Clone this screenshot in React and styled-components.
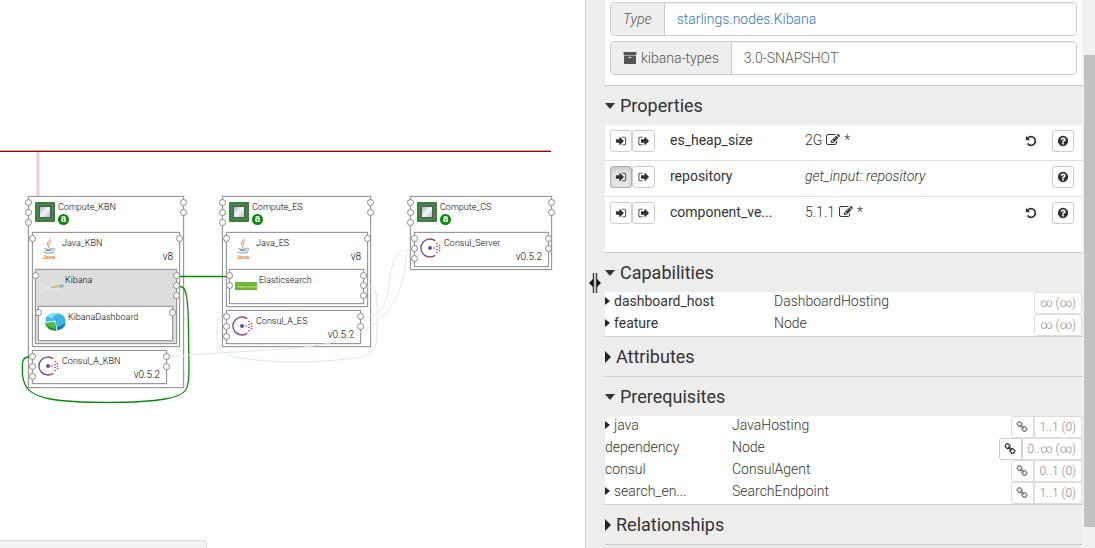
import React from "react";
import styled, { createGlobalStyle, css } from "styled-components";

const GlobalStyle = createGlobalStyle`
  * { box-sizing: border-box; }
  body {
    margin: 0;
    background: #fff;
    color: #333;
    font: 300 14px/20px Roboto, "Liberation Sans", sans-serif;
  }
  button, input { font: inherit; color: inherit; }
`;

/* ---------- icons ---------- */

const PATHS = {
  signIn:
    "M1312 896q0 26-19 45l-544 544q-19 19-45 19t-45-19-19-45v-288h-448q-26 0-45-19t-19-45v-384q0-26 19-45t45-19h448v-288q0-26 19-45t45-19 45 19l544 544q19 19 19 45zm352-352v704q0 119-84.500 203.500t-203.500 84.500h-320q-13 0-22.500-9.500t-9.500-22.500q0-4-1-20t-.5-26.500 3-23.500 10-19.500 20.500-6.500h320q66 0 113-47t47-113v-704q0-66-47-113t-113-47h-312l-11.500-1-11.500-3-8-5.500-7-9-2-13.500q0-4-1-20t-.5-26.500 3-23.500 10-19.500 20.500-6.500h320q119 0 203.500 84.500t84.500 203.500z",
  signOut:
    "M704 1440q0 4 1 20t.5 26.500-3 23.500-10 19.500-20.500 6.500h-320q-119 0-203.500-84.500t-84.500-203.500v-704q0-119 84.500-203.500t203.500-84.500h320q13 0 22.500 9.500t9.500 22.500q0 4 1 20t.5 26.500-3 23.500-10 19.500-20.500 6.500h-320q-66 0-113 47t-47 113v704q0 66 47 113t113 47h312l11.500 1 11.500 3 8 5.500 7 9 2 13.500zm928-544q0 26-19 45l-544 544q-19 19-45 19t-45-19-19-45v-288h-448q-26 0-45-19t-19-45v-384q0-26 19-45t45-19h448v-288q0-26 19-45t45-19 45 19l544 544q19 19 19 45z",
  undo:
    "M1664 896q0 156-61 298t-164 245-245 164-298 61q-172 0-327-72.500t-264-204.500q-7-10-6.500-22.500t8.500-20.500l137-138q10-9 25-9 16 2 23 12 73 95 179 147t225 52q104 0 198.500-40.500t163.500-109.500 109.500-163.500 40.500-198.500-40.500-198.500-109.500-163.500-163.500-109.500-198.500-40.500q-98 0-188 35.500t-160 101.500l137 138q31 30 14 69-17 40-59 40h-448q-26 0-45-19t-19-45v-448q0-42 40-59 39-17 69 14l130 129q107-101 244.500-156.500t284.500-55.500q156 0 298 61t245 164 164 245 61 298z",
  link:
    "M1520 1216q0-40-28-68l-208-208q-28-28-68-28-42 0-72 32 3 3 19 18.500t21.500 21.500 15 19 13 25.500 3.500 27.500q0 40-28 68t-68 28q-15 0-27.500-3.500t-25.500-13-19-15-21.500-21.500-18.500-19q-33 31-33 73 0 40 28 68l206 207q27 27 68 27 40 0 68-26l147-146q28-28 28-67zm-703-705q0-40-28-68l-206-207q-28-28-68-28-39 0-68 27l-147 146q-28 28-28 67 0 40 28 68l208 208q27 27 68 27 42 0 72-31-3-3-19-18.500t-21.500-21.500-15-19-13-25.500-3.500-27.500q0-40 28-68t68-28q15 0 27.500 3.500t25.500 13 19 15 21.500 21.500 18.500 19q33-31 33-73zm895 705q0 120-85 203l-147 146q-83 83-203 83-121 0-204-85l-206-207q-83-83-83-203 0-123 88-209l-88-88q-86 88-208 88-120 0-204-84l-208-208q-84-84-84-204t85-203l147-146q83-83 203-83 121 0 204 85l206 207q83 83 83 203 0 123-88 209l88 88q86-88 208-88 120 0 204 84l208 208q84 84 84 204z",
  edit:
    "M888 1184l116-116-152-152-116 116v56h96v96h56zm440-720q-16-16-33 1l-350 350q-17 17-1 33t33-1l350-350q17-17 1-33zm80 594v190q0 119-84.500 203.500t-203.500 84.500h-832q-119 0-203.500-84.500t-84.500-203.500v-832q0-119 84.500-203.500t203.500-84.500h832q63 0 117 25 15 7 18 23 3 17-9 29l-49 49q-14 14-32 8-23-6-45-6h-832q-66 0-113 47t-47 113v832q0 66 47 113t113 47h832q66 0 113-47t47-113v-126q0-13 9-22l64-64q15-15 35-7t20 29zm-96-738l288 288-672 672h-288v-288zm444 132l-92 92-288-288 92-92q28-28 68-28t68 28l152 152q28 28 28 68t-28 68z",
  archive:
    "M1088 832q0-26-19-45t-45-19h-256q-26 0-45 19t-19 45 19 45 45 19h256q26 0 45-19t19-45zm576-192v960q0 26-19 45t-45 19h-1408q-26 0-45-19t-19-45v-960q0-26 19-45t45-19h1408q26 0 45 19t19 45zm64-448v256q0 26-19 45t-45 19h-1536q-26 0-45-19t-19-45v-256q0-26 19-45t45-19h1536q26 0 45 19t19 45z",
  help:
    "M1024 1376v-192q0-14-9-23t-23-9h-192q-14 0-23 9t-9 23v192q0 14 9 23t23 9h192q14 0 23-9t9-23zm256-672q0-88-55.500-163t-138.500-116-170-41q-243 0-371 213-15 24 8 42l132 100q7 6 19 6 16 0 25-12 53-68 86-92 34-24 86-24 48 0 85.500 26t37.500 59q0 38-20 61t-68 45q-63 28-115.500 86.500t-52.500 125.500v36q0 14 9 23t23 9h192q14 0 23-9t9-23q0-19 21.500-49.500t54.500-49.500q32-18 49-28.500t46-35 44.500-48 28-60.500 12.500-81zm384 192q0 209-103 385.500t-279.500 279.500-385.500 103-385.500-103-279.500-279.500-103-385.500 103-385.500 279.500-279.500 385.500-103 385.500 103 279.500 279.500 103 385.500z",
};

const Glyph = styled.svg`
  flex: none;
  width: ${(p) => p.$size || 12}px;
  height: ${(p) => p.$size || 12}px;
  fill: currentColor;
`;

const Icon = ({ name, size }) => (
  <Glyph $size={size} viewBox="0 0 1792 1792" aria-hidden="true">
    <path d={PATHS[name]} />
  </Glyph>
);

const Picture = styled.svg`
  flex: none;
  width: 21px;
  height: 21px;
  overflow: visible;
`;

const ComputePicture = () => (
  <Picture viewBox="0 0 21 21">
    <defs>
      <linearGradient id="chip" x1="0" y1="0" x2="1" y2="1">
        <stop offset="0" stopColor="#a9b3c4" />
        <stop offset="0.5" stopColor="#f2f4f8" />
        <stop offset="1" stopColor="#b4bccb" />
      </linearGradient>
    </defs>
    <rect x="0" y="1" width="20" height="20" rx="1" fill="#3f7d43" />
    <rect x="2.500" y="3.500" width="15" height="15" fill="none" stroke="#568f58" strokeDasharray="1 1" />
    <rect x="4.500" y="5.500" width="11" height="11" fill="url(#chip)" stroke="#565c58" />
  </Picture>
);

const JavaPicture = () => (
  <Picture viewBox="0 0 21 21" fill="none">
    <path d="M10.500 1.500c2 2.500-4 3.500-1.500 6.500 1 1.200 1 2 .2 3M12.500 4c-3 1.200-2.500 2.500-1.500 4" stroke="#e8883a" />
    <path d="M5.500 11.500c1.500 1 6.500 1 8.500 0M6.500 13.500h6M4.500 15c2 1.500 9 1.300 10.500 0M14.500 11.300c2 0 1.500 2-1 2.500" stroke="#6d93b5" />
    <text x="3.500" y="21.500" fontSize="6" fontWeight="700" fill="#e8883a">Java</text>
  </Picture>
);

const KibanaPicture = () => (
  <Picture viewBox="0 0 21 21">
    <text x="0" y="15.500" fontSize="6" fill="#f1f1f1">kibana</text>
    <path d="M9 13.500l4-1.500v2H9z" fill="#8dc0a0" />
    <path d="M12 12.500l5-1.500v2.500h-5z" fill="#efb53c" />
    <path d="M17.500 10.500h4v3h-4z" fill="#72b9dc" />
  </Picture>
);

const DashboardPicture = () => (
  <Picture viewBox="0 0 21 21">
    <ellipse cx="10.500" cy="12" rx="10" ry="7.500" fill="#1579ad" />
    <ellipse cx="10.500" cy="9" rx="10" ry="7" fill="#36b5e8" />
    <path d="M2 5q6-5 14-2-8 0-9 5z" fill="#8be0fa" />
    <path d="M10.500 9.500L-0.500 11q0 9 13 9.500z" fill="#fff" />
    <path d="M10 11L0 12q1 7 11.500 8z" fill="#1e8a35" />
    <path d="M10 11L0 12q1 4 11 6z" fill="#49bd48" />
  </Picture>
);

const ElasticPicture = () => (
  <Picture viewBox="0 0 21 21">
    <rect x="-1" y="8" width="22" height="8" fill="#6db536" />
    <text x="0" y="13.500" fontSize="4" fill="#e4f2d5">elasticsearch</text>
  </Picture>
);

const ConsulPicture = () => (
  <Picture viewBox="0 0 21 21">
    <defs>
      <linearGradient id="consul" x1="0" y1="0" x2="1" y2="0">
        <stop offset="0.300" stopColor="#694a9c" />
        <stop offset="1" stopColor="#c62a50" />
      </linearGradient>
    </defs>
    <path d="M14.300 3.800A9 9 0 1 0 14.300 18.200" fill="none" stroke="url(#consul)" strokeWidth="1.300" />
    <circle cx="9" cy="11" r="2" fill="#694a9c" />
    <g fill="#c62a50">
      {[[13, 11], [16, 9.500], [16, 12.500], [18.500, 11], [16, 6.500], [16, 15.500], [18.500, 8.500], [18.500, 13.500]].map(([x, y]) => (
        <circle key={`${x}-${y}`} cx={x} cy={y} r="0.800" />
      ))}
    </g>
  </Picture>
);

const PICTURES = {
  compute: ComputePicture,
  java: JavaPicture,
  kibana: KibanaPicture,
  dashboard: DashboardPicture,
  elastic: ElasticPicture,
  consul: ConsulPicture,
};

/* ---------- topology canvas ---------- */

const Page = styled.div`
  display: flex;
  height: 100vh;
  overflow: hidden;
`;

const Canvas = styled.main`
  position: relative;
  flex: 1;
  min-width: 0;
  overflow: hidden;
`;

const Links = styled.svg`
  position: absolute;
  inset: 0;
  width: 100%;
  height: 100%;
  fill: none;
`;

const NodeBox = styled.article`
  position: absolute;
  left: ${(p) => p.$x}px;
  top: ${(p) => p.$y}px;
  width: ${(p) => p.$w}px;
  height: ${(p) => p.$h}px;
  display: flex;
  align-items: flex-start;
  gap: 2px;
  padding: 4px 6px;
  border: 1px solid #999;
  box-shadow: 0 0 1px #999;
  background: ${(p) => (p.$selected ? "#ddd" : "#fff")};
  color: #000;
  font-size: 9px;
  line-height: 12px;
`;

const NodeText = styled.div`
  flex: 1;
  min-width: 0;
  display: flex;
  flex-direction: column;
  gap: 1px;
  white-space: nowrap;
`;

const Version = styled.span`
  align-self: flex-end;
  font-size: 10px;
  line-height: 14px;
`;

const Badge = styled.span`
  width: 11px;
  height: 11px;
  border-radius: 50%;
  background: #078a07;
  color: #fff;
  font-size: 10px;
  font-weight: 700;
  line-height: 10px;
  text-align: center;
`;

const Ports = styled.div`
  position: absolute;
  top: 2px;
  ${(p) => p.$side}: -4px;
  display: flex;
  flex-direction: column;
  gap: 3px;
`;

const Port = styled.i`
  width: 7px;
  height: 7px;
  border: 1px solid #888;
  border-radius: 50%;
  background: #fff;
`;

const NODES = [
  { name: "Compute_KBN", kind: "compute", x: 28, y: 196, w: 156, h: 192, left: 3, right: 2, abstract: true },
  { name: "Java_KBN", kind: "java", x: 32, y: 232, w: 148, h: 115, left: 1, right: 1, version: "v8" },
  { name: "Kibana", kind: "kibana", x: 35, y: 269, w: 142, h: 75, left: 1, right: 3, selected: true },
  { name: "KibanaDashboard", kind: "dashboard", x: 38, y: 306, w: 135, h: 35, left: 1, right: 1 },
  { name: "Consul_A_KBN", kind: "consul", x: 32, y: 350, w: 135, h: 34, left: 3, right: 2, version: "v0.5.2" },
  { name: "Compute_ES", kind: "compute", x: 222, y: 196, w: 149, h: 151, left: 3, right: 2, abstract: true },
  { name: "Java_ES", kind: "java", x: 226, y: 232, w: 142, h: 75, left: 1, right: 1, version: "v8" },
  { name: "Elasticsearch", kind: "elastic", x: 229, y: 269, w: 135, h: 35, left: 2, right: 3 },
  { name: "Consul_A_ES", kind: "consul", x: 226, y: 310, w: 135, h: 34, left: 3, right: 2, version: "v0.5.2" },
  { name: "Compute_CS", kind: "compute", x: 410, y: 196, w: 142, h: 74, left: 3, right: 2, abstract: true },
  { name: "Consul_Server", kind: "consul", x: 414, y: 232, w: 135, h: 35, left: 3, right: 2, version: "v0.5.2" },
];

const PortColumn = ({ side, count }) => (
  <Ports $side={side}>
    {Array.from({ length: count }, (_, i) => (
      <Port key={i} />
    ))}
  </Ports>
);

const Node = ({ node }) => {
  const NodePicture = PICTURES[node.kind];
  return (
    <NodeBox $x={node.x} $y={node.y} $w={node.w} $h={node.h} $selected={node.selected}>
      <NodePicture />
      <NodeText>
        <span>{node.name}</span>
        {node.abstract && <Badge>a</Badge>}
        {node.version && <Version>{node.version}</Version>}
      </NodeText>
      <PortColumn side="left" count={node.left} />
      <PortColumn side="right" count={node.right} />
    </NodeBox>
  );
};

const StatusBubble = styled.div`
  position: absolute;
  left: 0;
  bottom: 0;
  width: 207px;
  height: 8px;
  border: 1px solid #ddd;
  border-width: 1px 1px 0 0;
  border-top-right-radius: 4px;
  background: #f2f2f2;
`;

/* ---------- details panel ---------- */

const Panel = styled.aside`
  position: relative;
  flex: none;
  width: 510px;
  display: flex;
  padding-left: 19px;
  border-left: 1px solid #ccc;
  background: #ededed;
`;

const Handle = styled.svg`
  position: absolute;
  left: 3px;
  top: 273px;
  width: 12px;
  height: 20px;
  cursor: col-resize;
`;

const Content = styled.div`
  flex: 1;
  min-width: 0;
`;

const ScrollTrack = styled.div`
  flex: none;
  width: 13px;
  padding: 55px 0 21px 2px;
  background: #f1f1f1;
`;

const ScrollThumb = styled.div`
  height: 100%;
  background: #c1c1c1;
`;

const Section = styled.section`
  border-bottom: 1px solid #ccc;
`;

const Fields = styled.div`
  display: flex;
  flex-direction: column;
  gap: 5px;
  padding: 2px 5px 10px;
  background: #fff;
`;

const Field = styled.div`
  display: flex;
  height: 34px;
  border: 1px solid #ccc;
  border-radius: 4px;
  overflow: hidden;
  color: #555;
`;

const Addon = styled.label`
  display: flex;
  align-items: center;
  gap: 4px;
  padding: 0 12px;
  border-right: 1px solid #ccc;
  background: #eee;
  font-style: ${(p) => (p.$italic ? "italic" : "normal")};
`;

const fieldValue = css`
  flex: 1;
  min-width: 0;
  padding: 6px 12px;
  border: 0;
  background: #fff;
  box-shadow: inset 0 1px 1px rgba(0, 0, 0, 0.075);
`;

const FieldInput = styled.input`
  ${fieldValue}
`;

const FieldLink = styled.a`
  ${fieldValue}
  color: #337ab7;
  text-decoration: none;
`;

const Heading = styled.h3`
  margin: 0;
  font-size: 18px;
  font-weight: 400;
`;

const Toggle = styled.button`
  display: flex;
  align-items: center;
  gap: 5px;
  width: 100%;
  height: 39px;
  padding: 0;
  border: 0;
  background: none;
`;

const Caret = styled.i`
  flex: none;
  border: solid transparent;
  ${(p) =>
    p.$open
      ? "border-width: 6px 5px 0; border-top-color: #333;"
      : p.$small
        ? "border-width: 4px 0 4px 5px; border-left-color: #223;"
        : "border-width: 6px 0 6px 6px; border-left-color: #223;"}
`;

const Table = styled.table`
  width: 100%;
  table-layout: fixed;
  border-collapse: collapse;
  background: #fff;

  th, td {
    padding: 0;
    font-weight: 300;
    text-align: left;
    white-space: nowrap;
  }
`;

const PropertyBody = styled.div`
  padding-bottom: 19px;
  background: #fff;
`;

const PropertyRow = styled.tr`
  height: 36px;
  box-shadow: inset 0 -1px ${(p) => (p.$last ? "transparent" : "#ddd")};
`;

const PropertyCell = styled.td`
  vertical-align: top;
`;

const PropertyLine = styled.div`
  display: flex;
  align-items: center;
  justify-content: ${(p) => (p.$end ? "flex-end" : "flex-start")};
  gap: ${(p) => p.$gap || 0}px;
  height: ${(p) => (p.$buttons ? 32 : 30)}px;
  padding: ${(p) => (p.$buttons ? "0 8px 0 5px" : 0)};
  font-weight: ${(p) => (p.$strong ? 400 : 300)};
  font-style: ${(p) => (p.$italic ? "italic" : "normal")};
`;

const IconButton = styled.button`
  display: flex;
  align-items: center;
  justify-content: center;
  flex: none;
  width: ${(p) => p.$width || 22}px;
  height: 22px;
  padding: 0;
  border: 1px solid ${(p) => (p.$plain ? "transparent" : "#ccc")};
  border-radius: ${(p) => (p.$joined ? "3px 0 0 3px" : "3px")};
  background: #fff;
  color: #333;

  &:disabled { opacity: 0.65; }

  &[aria-pressed="true"] {
    border-color: #adadad;
    background: #e6e6e6;
    box-shadow: inset 0 3px 5px rgba(0, 0, 0, 0.125);
  }
`;

const EditButton = styled.button`
  display: flex;
  padding: 0;
  border: 0;
  background: none;
`;

const RelationRow = styled.tr`
  height: 22px;
`;

const NameCell = styled.div`
  display: flex;
  align-items: center;
  gap: 4px;
  height: 22px;
  padding-bottom: 4px;
  font-weight: ${(p) => (p.$strong ? 400 : 300)};
`;

const Bounds = styled.div`
  display: flex;
  justify-content: flex-end;
`;

const Count = styled.button`
  height: 22px;
  padding: 0 5px;
  border: 1px solid #ddd;
  border-radius: ${(p) => (p.$joined ? "0" : "3px")};
  background: #fff;
  color: #888;
  font-size: 12px;
  line-height: 20px;
`;

const PROPERTIES = [
  { name: "es_heap_size", value: "2G", editable: true },
  { name: "repository", value: "get_input: repository", input: true },
  { name: "component_ve...", value: "5.1.1", editable: true },
];

const CAPABILITIES = [
  { name: "dashboard_host", type: "DashboardHosting", count: "∞ (∞)", caret: true, strong: true },
  { name: "feature", type: "Node", count: "∞ (∞)", caret: true, strong: true },
];

const PREREQUISITES = [
  { name: "java", type: "JavaHosting", count: "1..1 (0)", caret: true, link: true, full: true },
  { name: "dependency", type: "Node", count: "0..∞ (∞)", link: true },
  { name: "consul", type: "ConsulAgent", count: "0..1 (0)", link: true, full: true },
  { name: "search_en...", type: "SearchEndpoint", count: "1..1 (0)", caret: true, link: true, full: true },
];

const PanelSection = ({ title, open, children }) => (
  <Section>
    <Heading>
      <Toggle aria-expanded={!!open}>
        <Caret $open={open} />
        {title}
      </Toggle>
    </Heading>
    {children}
  </Section>
);

const Properties = () => (
  <PropertyBody>
    <Table>
      <colgroup>
        <col width="65" />
        <col width="135" />
        <col />
        <col width="70" />
      </colgroup>
      <tbody>
        {PROPERTIES.map((p, i) => (
          <PropertyRow key={p.name} $last={i === PROPERTIES.length - 1}>
            <PropertyCell>
              <PropertyLine $buttons>
                <IconButton aria-label="Set as input" aria-pressed={!!p.input}>
                  <Icon name="signIn" />
                </IconButton>
                <IconButton $width={23} aria-label="Set as output">
                  <Icon name="signOut" />
                </IconButton>
              </PropertyLine>
            </PropertyCell>
            <PropertyCell as="th" scope="row">
              <PropertyLine $strong>{p.name}</PropertyLine>
            </PropertyCell>
            <PropertyCell>
              <PropertyLine $gap={4} $italic={p.input}>
                <span>{p.value}</span>
                {p.editable && (
                  <>
                    <EditButton aria-label="Edit value">
                      <Icon name="edit" size={14} />
                    </EditButton>
                    <span>*</span>
                  </>
                )}
              </PropertyLine>
            </PropertyCell>
            <PropertyCell>
              <PropertyLine $buttons $end $gap={10}>
                {p.editable && (
                  <IconButton $plain aria-label="Reset value">
                    <Icon name="undo" />
                  </IconButton>
                )}
                <IconButton aria-label="Help">
                  <Icon name="help" />
                </IconButton>
              </PropertyLine>
            </PropertyCell>
          </PropertyRow>
        ))}
      </tbody>
    </Table>
  </PropertyBody>
);

const Relations = ({ rows, nameWidth }) => (
  <Table>
    <colgroup>
      <col width={nameWidth} />
      <col />
      <col width="90" />
    </colgroup>
    <tbody>
      {rows.map((r) => (
        <RelationRow key={r.name}>
          <th scope="row">
            <NameCell $strong={r.strong}>
              {r.caret && <Caret $small />}
              {r.name}
            </NameCell>
          </th>
          <td>
            <NameCell>{r.type}</NameCell>
          </td>
          <td>
            <Bounds>
              {r.link && (
                <IconButton $width={23} $joined disabled={r.full} aria-label="Add relationship">
                  <Icon name="link" />
                </IconButton>
              )}
              <Count $joined={r.link} disabled>
                {r.count}
              </Count>
            </Bounds>
          </td>
        </RelationRow>
      ))}
    </tbody>
  </Table>
);

export default function App() {
  return (
    <Page>
      <GlobalStyle />
      <Canvas>
        {NODES.map((node) => (
          <Node key={node.name} node={node} />
        ))}
        <Links>
          <path d="M0 150.500H551" stroke="#dda0a0" />
          <path d="M0 151.500H551" stroke="#9c0000" />
          <path d="M38 152V196" stroke="#f0cccc" strokeWidth="3" />
          <g stroke="#078a07" strokeWidth="1.300">
            <path d="M180 276.500H226" />
            <path d="M180 286.500C187 286.500 188 300 188.500 330L189 368C189 390 188 395 165 399C140 403.500 75 403.500 50 399C30 395 24 388 22.500 375C22 362 22 357 29 357" />
          </g>
          <g stroke="#dcefdc">
            <path d="M367 286.500C375 286.500 377 292 377 305V333C377 350 372 356 355 358C320 363 270 363 240 358C222 355 217 350 217 338V328C217 320 219 317 223 317" />
            <path d="M170 357C240 349 300 353 345 339C385 325 399 300 404 273C406 260 406 250 410 249.500" />
            <path d="M364 317C380 316 386 308 389 285C392 262 394 250 410 249.500" />
          </g>
        </Links>
        <StatusBubble />
      </Canvas>
      <Panel>
        <Handle viewBox="0 0 12 20">
          <path d="M4.500 0V20M7.500 0V20" stroke="#444" strokeWidth="1.500" />
          <path d="M0 10L4 6V14ZM12 10L8 6V14Z" fill="#111" />
        </Handle>
        <Content>
          <Section>
            <Fields>
              <Field>
                <Addon as="span" $italic>Type</Addon>
                <FieldLink href="#type">starlings.nodes.Kibana</FieldLink>
              </Field>
              <Field>
                <Addon htmlFor="archive-version">
                  <Icon name="archive" size={14} />
                  kibana-types
                </Addon>
                <FieldInput id="archive-version" readOnly value="3.0-SNAPSHOT" />
              </Field>
            </Fields>
          </Section>
          <PanelSection title="Properties" open>
            <Properties />
          </PanelSection>
          <PanelSection title="Capabilities" open>
            <Relations rows={CAPABILITIES} nameWidth="169" />
          </PanelSection>
          <PanelSection title="Attributes" />
          <PanelSection title="Prerequisites" open>
            <Relations rows={PREREQUISITES} nameWidth="127" />
          </PanelSection>
          <PanelSection title="Relationships" />
        </Content>
        <ScrollTrack>
          <ScrollThumb />
        </ScrollTrack>
      </Panel>
    </Page>
  );
}
